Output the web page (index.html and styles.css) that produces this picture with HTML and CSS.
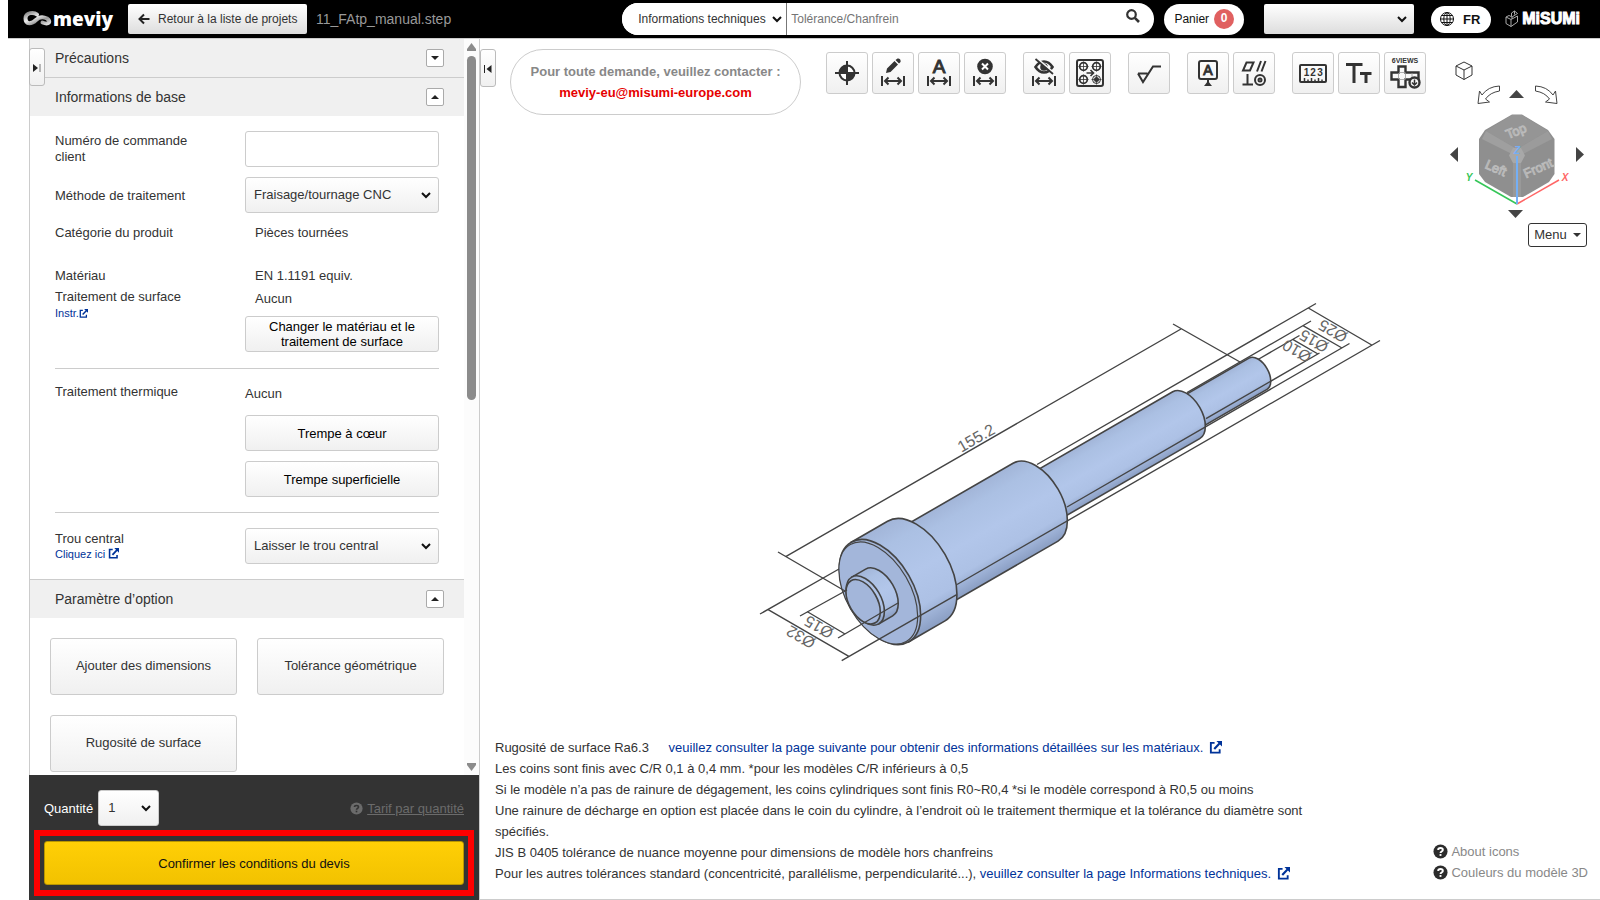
FILE: index.html
```html
<!DOCTYPE html>
<html lang="fr">
<head>
    <meta charset="UTF-8">
    <meta name="viewport" content="width=device-width, initial-scale=1.0">
    <title>meviy - 11_FAtp_manual.step</title>
    <link rel="stylesheet" href="styles.css">
</head>
<body>

    <!-- shared symbols -->
    <svg class="defs" width="0" height="0" aria-hidden="true">
        <symbol id="dim" viewBox="1 1 40 40">
            <path d="M10 24V34M32 24V34M13 29H29M16.500 25.500L13 29L16.500 32.500M25.500 25.500L29 29L25.500 32.500" fill="none" stroke="#333" stroke-width="2"/>
        </symbol>
        <symbol id="ext" viewBox="0 0 14 14">
            <path d="M6 2H2V12.500H11.500V9" fill="none" stroke="currentColor" stroke-width="2"/>
            <path d="M8 0H14V6L11.800 3.800L6.500 9.500L4.800 7.800L10.200 2.200Z" fill="currentColor"/>
        </symbol>
        <symbol id="help" viewBox="0 0 16 16">
            <circle cx="8" cy="8" r="7.500" fill="currentColor"/>
            <path class="q" d="M5.500 6.300C5.500 3.600 10.500 3.600 10.500 6.300C10.500 8 8 7.900 8 9.500" fill="none" stroke-width="2"/>
            <rect class="qd" x="7" y="10.700" width="2" height="2"/>
        </symbol>
    </svg>

    <header class="header">
        <a class="logo" href="#">
            <svg width="29" height="18" viewBox="0 0 29 18" aria-hidden="true">
                <defs>
                    <linearGradient id="metal" x1="0" y1="0" x2="1" y2="1">
                        <stop offset="0" stop-color="#888"/><stop offset=".4" stop-color="#eee"/><stop offset=".7" stop-color="#999"/><stop offset="1" stop-color="#ddd"/>
                    </linearGradient>
                </defs>
                <path d="M14 4.500C11 2 2.500 2 2.500 8.500C2.500 15 9 14 13 10C16 7 20 6.500 24 8.500C28.500 11.500 26 15 19.500 12.500" fill="none" stroke="url(#metal)" stroke-width="4" stroke-linecap="round"/>
            </svg>
            <span>meviy</span>
        </a>
        <a class="back" href="#">
            <svg width="12" height="12" viewBox="0 0 12 12" aria-hidden="true"><path d="M11.500 6H2M6 1.500L1.500 6L6 10.500" fill="none" stroke="#222" stroke-width="2"/></svg>
            Retour à la liste de projets
        </a>
        <span class="filename">11_FAtp_manual.step</span>

        <form class="search">
            <select class="search-type" aria-label="Catégorie de recherche"><option>Informations techniques</option></select>
            <input type="text" placeholder="Tolérance/Chanfrein" aria-label="Recherche">
            <button type="button" aria-label="Rechercher">
                <svg width="14" height="14" viewBox="0 0 14 14"><circle cx="5.500" cy="5.500" r="4.300" fill="none" stroke="#333" stroke-width="2.200"/><path d="M8.800 8.800L13 13" stroke="#333" stroke-width="2.600"/></svg>
            </button>
        </form>
        <a class="cart" href="#">Panier <span class="badge">0</span></a>
        <select class="account" aria-label="Compte"><option></option></select>
        <button class="lang" type="button">
            <svg width="14" height="14" viewBox="0 0 14 14" aria-hidden="true"><g fill="none" stroke="#111"><circle cx="7" cy="7" r="6.500"/><ellipse cx="7" cy="7" rx="3.200" ry="6.500"/><path d="M7 0V14M0 7H14M1.500 3.500H12.500M1.500 10.500H12.500"/></g></svg>
            FR
        </button>
        <a class="misumi" href="#">
            <svg width="14" height="18" viewBox="0 0 14 18" aria-hidden="true"><path d="M1 7L6 9.500V16.500L1 13.500ZM6 9.500L12.500 6V12L6 16.500M1 7L4 5.500L7 7L12.500 3.500L9.500 1L6.500 3V6.500M9.500 1V4.500M7 7V9" fill="none" stroke="#aaa"/></svg>
            <span>MiSUMi</span>
        </a>
    </header>

    <main class="main">
        <aside class="panel">
            <button class="handle" type="button" aria-label="Replier">
                <svg width="8" height="8" viewBox="0 0 8 8"><path d="M0 0L5 4L0 8Z" fill="#222"/><path d="M7 0V8" stroke="#777"/></svg>
            </button>
            <div class="panel-body">
                <div class="scroll">
                    <section>
                        <h2 class="head">Précautions
                            <button class="toggle" type="button" aria-label="Ouvrir Précautions"><svg width="8" height="4" viewBox="0 0 8 4"><path d="M0 0H8L4 4Z"/></svg></button>
                        </h2>
                    </section>
                    <section>
                        <h2 class="head">Informations de base
                            <button class="toggle" type="button" aria-label="Fermer Informations de base"><svg width="8" height="4" viewBox="0 0 8 4"><path d="M0 4H8L4 0Z"/></svg></button>
                        </h2>
                        <div class="fields">
                            <div class="row">
                                <label class="name name-order" for="order">Numéro de commande client</label>
                                <input class="control" id="order" type="text">
                            </div>
                            <div class="row">
                                <label class="name" for="method">Méthode de traitement</label>
                                <select class="control" id="method"><option>Fraisage/tournage CNC</option></select>
                            </div>
                            <div class="row">
                                <div class="name">Catégorie du produit</div>
                                <div class="value indent">Pièces tournées</div>
                            </div>
                            <div class="row material">
                                <div class="name">
                                    <div>Matériau</div>
                                    <div class="surface">Traitement de surface</div>
                                    <a class="instr" href="#">Instr.<svg width="9" height="9"><use href="#ext"/></svg></a>
                                </div>
                                <div class="value">
                                    <div class="indent">EN 1.1191 equiv.</div>
                                    <div class="indent finish">Aucun</div>
                                    <button class="control" type="button">Changer le matériau et le traitement de surface</button>
                                </div>
                            </div>
                            <hr>
                            <div class="row heat">
                                <div class="name">Traitement thermique</div>
                                <div class="value">
                                    <div class="state">Aucun</div>
                                    <button class="control" type="button">Trempe à cœur</button>
                                    <button class="control" type="button">Trempe superficielle</button>
                                </div>
                            </div>
                            <hr>
                            <div class="row hole">
                                <div class="name">
                                    <label for="hole">Trou central</label><br>
                                    <a href="#">Cliquez ici <svg width="11" height="11"><use href="#ext"/></svg></a>
                                </div>
                                <select class="control" id="hole"><option>Laisser le trou central</option></select>
                            </div>
                        </div>
                    </section>
                    <section>
                        <h2 class="head">Paramètre d’option
                            <button class="toggle" type="button" aria-label="Fermer Paramètre d’option"><svg width="8" height="4" viewBox="0 0 8 4"><path d="M0 4H8L4 0Z"/></svg></button>
                        </h2>
                        <div class="options">
                            <button type="button">Ajouter des dimensions</button>
                            <button type="button">Tolérance géométrique</button>
                            <button type="button">Rugosité de surface</button>
                        </div>
                    </section>
                </div>
                <div class="scrollbar" aria-hidden="true">
                    <svg width="9" height="8" viewBox="0 0 9 8"><path d="M4.500 0L9 6V8H0V6Z" fill="#8b8b8b"/></svg>
                    <div class="track"><div class="thumb"></div></div>
                    <svg width="9" height="8" viewBox="0 0 9 8"><path d="M4.500 8L9 2V0H0V2Z" fill="#8b8b8b"/></svg>
                </div>
            </div>
            <div class="order">
                <div class="quantity">
                    <label for="qty">Quantité</label>
                    <select id="qty"><option>1</option></select>
                    <a class="tarif" href="#"><svg width="13" height="13"><use href="#help"/></svg> <span>Tarif par quantité</span></a>
                </div>
                <div class="highlight">
                    <button class="confirm" type="button">Confirmer les conditions du devis</button>
                </div>
            </div>
        </aside>

        <section class="viewer">
            <!-- 3D model -->
            <svg class="model" viewBox="480 39 1120 860" role="img" aria-label="Modèle 3D">
                <defs>
                    <linearGradient id="steel" x1="0" y1="0" x2="0" y2="1">
                        <stop offset="0" stop-color="#a2b5d8"/><stop offset=".18" stop-color="#abc0e3"/><stop offset=".5" stop-color="#b2c6ea"/><stop offset=".78" stop-color="#adc1e5"/><stop offset="1" stop-color="#8a9ec3"/>
                    </linearGradient>
                </defs>
                <!-- x axis of this group runs along the shaft -->
                <g transform="translate(880 592) rotate(-30)" fill="url(#steel)" stroke="#444" stroke-width="1.600">
                    <path d="M340 -18H436.500A10.400 18 0 0 1 436.500 18H340Z"/>
                    <path d="M170 -27H353.600A15.600 27 0 0 1 353.600 27H170Z"/>
                    <path d="M30 -45H179.600A26 45 0 0 1 179.600 45H30Z"/>
                    <path d="M0 -57.500H41.900A33.200 57.500 0 0 1 41.900 57.500H0Z"/>
                    <ellipse cx="0" cy="0" rx="33.200" ry="57.500" fill="#a3b6da"/>
                    <ellipse cx="-2" cy="0" rx="32" ry="56" fill="#a3b6da" stroke-width="1.200"/>
                    <path d="M-17 -27H-1A15.600 27 0 0 1 -1 27H-17Z"/>
                    <ellipse cx="-17" cy="0" rx="15.600" ry="27"/>
                    <ellipse cx="-19.500" cy="0" rx="14" ry="24.300" fill="#a3b6da"/>
                </g>
                <g class="dims">
                    <path d="M778 552L845 591M785.700 556.700L1181 329M1173 324L1240 362"/>
                    <path d="M839 569L760 614M767.700 609.300L849.300 656.700M841.700 660.700L956.700 594.700"/>
                    <path d="M847 590L800 616M807 611.500L845 634M838 638L898 603"/>
                    <path d="M1037 464.500L1316 303.500M1308.300 308L1371.700 345M957 584.500L1380 340.500"/>
                    <path d="M1187 392.700L1311 321M1303 325.700L1342 348M1067 507L1349.500 343.500"/>
                    <path d="M1258 359.500L1299.500 335.500M1292.700 339.300L1318 354M1206 418.700L1319.500 353"/>
                </g>
                <g class="dim-text">
                    <text transform="translate(976 438) rotate(-30)">155.2</text>
                    <text transform="translate(1333 331) rotate(210)">Ø25</text>
                    <text transform="translate(1314 341) rotate(210)">Ø15</text>
                    <text transform="translate(1297 351) rotate(210)">Ø10</text>
                    <text transform="translate(801 637) rotate(210)">Ø32</text>
                    <text transform="translate(819 627) rotate(210)">Ø15</text>
                </g>
            </svg>

            <div class="overlay">
                <button class="handle handle-right" type="button" aria-label="Déplier">
                    <svg width="8" height="8" viewBox="0 0 8 8"><path d="M7.500 0L2.500 4L7.500 8Z" fill="#222"/><path d="M.500 0V8" stroke="#222"/></svg>
                </button>
                <div class="top">
                    <div class="contact">
                        <p>Pour toute demande, veuillez contacter :</p>
                        <a href="mailto:meviy-eu@misumi-europe.com">meviy-eu@misumi-europe.com</a>
                    </div>

                    <div class="toolbar">
                        <div class="group">
                            <button type="button" aria-label="Origine"><svg viewBox="1 1 40 40"><circle cx="21" cy="21" r="7.500" fill="#fff" stroke="#333" stroke-width="2"/><path d="M21 21V13.500A7.500 7.500 0 0 0 13.500 21ZM21 21V28.500A7.500 7.500 0 0 0 28.500 21Z" fill="#333"/><path d="M21 9V33M9 21H33" stroke="#333" stroke-width="2"/></svg></button>
                            <button type="button" aria-label="Modifier la cote"><svg viewBox="1 1 40 40"><path d="M14 21L15 16.500L22.500 9L26 12.500L18.500 20ZM23.500 8L25.500 6.500Q27 6 28.200 7.500Q29 9 28.500 10L27 11.500Z" fill="#333"/><use href="#dim" x="1" y="1" width="40" height="40"/></svg></button>
                            <button type="button" aria-label="Cote texte"><svg viewBox="1 1 40 40"><text x="21" y="21" font-size="19" stroke="#333">A</text><use href="#dim" x="1" y="1" width="40" height="40"/></svg></button>
                            <button type="button" aria-label="Supprimer la cote"><svg viewBox="1 1 40 40"><circle cx="21" cy="14.500" r="7.800" fill="#333"/><path d="M18 11.500L24 17.500M24 11.500L18 17.500" stroke="#fff" stroke-width="2"/><use href="#dim" x="1" y="1" width="40" height="40"/></svg></button>
                        </div>
                        <div class="group">
                            <button type="button" aria-label="Masquer les cotes"><svg viewBox="1 1 40 40"><path d="M12.500 15Q16 9.500 21 9.500T29.500 15Q26 20.500 21 20.500T12.500 15Z" fill="none" stroke="#333" stroke-width="2.600"/><circle cx="21" cy="15" r="3.800" fill="#333"/><circle cx="22" cy="14" r="1.300" fill="#fff"/><path d="M14 6.500L31 21" stroke="#f8f8f8" stroke-width="2"/><path d="M12.500 7L30 22" stroke="#333" stroke-width="1.800"/><use href="#dim" x="1" y="1" width="40" height="40"/></svg></button>
                            <button type="button" aria-label="Trous"><svg viewBox="1 1 40 40"><g fill="none" stroke="#333"><rect x="8" y="8" width="26" height="26" rx="2" stroke-width="2"/><g stroke-width="1.800"><circle cx="14.500" cy="14.500" r="3.800"/><circle cx="27.500" cy="14.500" r="3.800"/><circle cx="14.500" cy="27.500" r="3.800"/></g><path d="M14.500 9.500V19.500M9.500 14.500H19.500M27.500 9.500V19.500M22.500 14.500H32.500M14.500 22.500V32.500M9.500 27.500H19.500M27.500 22.500V32.500M22.500 27.500H32.500" stroke-width=".8"/><circle cx="27.500" cy="27.500" r="4"/><path d="M17.500 21H24M21.500 18L24.500 21L21.500 24" stroke-width="1.600"/></g><circle cx="27.500" cy="27.500" r="2.500" fill="#333"/></svg></button>
                        </div>
                        <div class="group">
                            <button type="button" aria-label="Rugosité"><svg viewBox="1 1 40 40"><path d="M10 21.500H19.500M10 21.500L15 30L25 14.500H33" fill="none" stroke="#333" stroke-width="2"/></svg></button>
                        </div>
                        <div class="group">
                            <button type="button" aria-label="Référence"><svg viewBox="1 1 40 40"><rect x="12" y="9" width="18" height="18" rx="2" fill="none" stroke="#333" stroke-width="2"/><path d="M21 27V31" stroke="#333" stroke-width="2"/><path d="M21 29L25 34H17Z" fill="#333"/><text x="21" y="23" font-size="14" stroke="#333">A</text></svg></button>
                            <button type="button" aria-label="Tolérance géométrique"><svg viewBox="1 1 40 40"><g fill="none" stroke="#333" stroke-width="2"><path d="M13.500 10.500H20.500L17 18.500H10ZM28 9L24 19.500M32.500 9L28.500 19.500M14.500 22V32.500M9.500 32.500H20"/><circle cx="27" cy="28" r="5"/><circle cx="27" cy="28" r="1.500"/></g></svg></button>
                        </div>
                        <div class="group">
                            <button type="button" aria-label="Mesure"><svg viewBox="1 1 40 40"><rect x="8" y="13" width="26" height="17" rx="1" fill="none" stroke="#333" stroke-width="2"/><path d="M12.500 30V26M16 30V27.500M19.500 30V26M23 30V27.500M26.500 30V26M30 30V27.500" stroke="#333" stroke-width="1.500"/><g font-size="10" font-weight="bold"><text x="14.500" y="23.500">1</text><text x="21" y="23.500">2</text><text x="28" y="23.500">3</text></g></svg></button>
                            <button type="button" aria-label="Taille du texte"><svg viewBox="1 1 40 40"><path d="M8 12.500H24.500M16 12.500V31M22 21.500H33.500M28 21.500V31" fill="none" stroke="#333" stroke-width="3"/></svg></button>
                            <button type="button" aria-label="Six vues"><svg viewBox="1 1 40 40"><text x="21" y="11" font-size="7" font-weight="bold">6VIEWS</text><path d="M14.500 14.500H21.500V20.500H34.500V27.500H21.500V35H14.500V27.500H7.500V20.500H14.500Z" fill="#f8f8f8" stroke="#333" stroke-width="2.400"/><path d="M15 20.500H21.500M15 27.500H21.500M14.500 21V27M21.500 21V27M28 21V27" stroke="#999" stroke-width=".8"/><circle cx="30.500" cy="30.500" r="5" fill="#f8f8f8" stroke="#333" stroke-width="2.400"/><path d="M30.500 27.500V32.500M28 30.500L30.500 33L33 30.500" fill="none" stroke="#333" stroke-width="1.500"/></svg></button>
                        </div>
                    </div>

                    <div class="views">
                        <button class="home" type="button" aria-label="Vue isométrique"><svg width="18" height="20" viewBox="0 0 18 20"><path d="M9 1L17 5V14L9 18.500L1 14V5ZM1 5L9 9L17 5M9 9V18.500" fill="none" stroke="#333"/></svg></button>
                        <div class="turn">
                            <button type="button" aria-label="Pivoter à gauche"><svg width="24" height="20" viewBox="0 0 24 20"><path d="M22.500 1V6Q13 7.500 8.500 14L12.500 17L1 18.500L2.500 6L5 10Q11 1.500 22.500 1Z" fill="none" stroke="#444"/></svg></button>
                            <button class="up" type="button" aria-label="Haut"><svg width="15" height="8" viewBox="0 0 15 8"><path d="M0 8L7.500 0L15 8Z" fill="#444"/></svg></button>
                            <button type="button" aria-label="Pivoter à droite"><svg width="24" height="20" viewBox="0 0 24 20"><path d="M1.500 1V6Q11 7.500 15.500 14L11.500 17L23 18.500L21.500 6L19 10Q13 1.500 1.500 1Z" fill="none" stroke="#444"/></svg></button>
                        </div>
                        <div class="orbit">
                            <button type="button" aria-label="Gauche"><svg width="8" height="15" viewBox="0 0 8 15"><path d="M8 0L0 7.500L8 15Z" fill="#444"/></svg></button>
                            <svg class="cube" width="112" height="100" viewBox="1461 108 112 100">
                                <path d="M1512 114.500H1522L1548 130L1554.500 139V174L1549 182L1523 197H1511L1485 182L1479 174V139L1485 130Z" fill="#8f8f8f"/>
                                <path d="M1512 115H1522L1548 131L1519 148H1515L1486 131Z" fill="#959595"/>
                                <path d="M1486 131L1515 148L1512 154L1482 139Z" fill="#9f9f9f"/>
                                <path d="M1548 131L1519 148L1523 154L1552 139Z" fill="#9b9b9b"/>
                                <path d="M1513 162H1521V197H1513Z" fill="#999"/>
                                <path d="M1513 148H1521L1525 155.500L1521 163H1513L1509 155.500Z" fill="#a8a8a8"/>
                                <text class="face" transform="translate(1516 131) rotate(-22)">Top</text>
                                <text class="face" transform="translate(1496 168) rotate(24)">Left</text>
                                <text class="face" transform="translate(1538 168) rotate(-24)">Front</text>
                                <path d="M1517 204L1475 180" stroke="#35c658" stroke-width="1.500"/>
                                <path d="M1517 204L1559 180" stroke="#f66" stroke-width="1.500"/>
                                <path d="M1517 204V156" stroke="#74aff5" stroke-width="2"/>
                                <text class="axis" x="1469" y="177" fill="#35c658">Y</text>
                                <text class="axis" x="1565" y="177" fill="#f66">X</text>
                                <text class="axis" x="1517" y="150" fill="#74aff5">Z</text>
                            </svg>
                            <button type="button" aria-label="Droite"><svg width="8" height="15" viewBox="0 0 8 15"><path d="M0 0L8 7.500L0 15Z" fill="#444"/></svg></button>
                        </div>
                        <button class="down" type="button" aria-label="Bas"><svg width="15" height="8" viewBox="0 0 15 8"><path d="M0 0L7.500 8L15 0Z" fill="#444"/></svg></button>
                        <button class="menu" type="button">Menu <svg width="8" height="4" viewBox="0 0 8 4"><path d="M0 0H8L4 4Z" fill="#333"/></svg></button>
                    </div>
                </div>

                <div class="bottom">
                    <div class="notes">
                        <p>Rugosité de surface Ra6.3 <a class="more" href="#">veuillez consulter la page suivante pour obtenir des informations détaillées sur les matériaux. <svg width="13" height="13"><use href="#ext"/></svg></a></p>
                        <p>Les coins sont finis avec C/R 0,1 à 0,4 mm. *pour les modèles C/R inférieurs à 0,5</p>
                        <p>Si le modèle n’a pas de rainure de dégagement, les coins cylindriques sont finis R0~R0,4 *si le modèle correspond à R0,5 ou moins</p>
                        <p>Une rainure de décharge en option est placée dans le coin du cylindre, à l’endroit où le traitement thermique et la tolérance du diamètre sont spécifiés.</p>
                        <p>JIS B 0405 tolérance de nuance moyenne pour dimensions de modèle hors chanfreins</p>
                        <p>Pour les autres tolérances standard (concentricité, parallélisme, perpendicularité...), <a href="#">veuillez consulter la page Informations techniques. <svg width="13" height="13"><use href="#ext"/></svg></a></p>
                    </div>
                    <div class="help">
                        <a href="#"><svg width="15" height="15"><use href="#help"/></svg>About icons</a>
                        <a href="#"><svg width="15" height="15"><use href="#help"/></svg>Couleurs du modèle 3D</a>
                    </div>
                </div>
            </div>
        </section>
    </main>

</body>
</html>
```

FILE: styles.css
```css
*{
    box-sizing: border-box;
}
body{
    margin: 0;
    height: 100vh;
    display: flex;
    flex-direction: column;
    overflow: hidden;
    background-color: #fff;
    color: #333;
    font-family: "Liberation Sans", Arial, sans-serif;
    font-size: 13px;
}
button, input, select{
    font-family: inherit;
    font-size: inherit;
    color: inherit;
    margin: 0;
}
button{
    padding: 0;
}
a{
    color: #003399;
    text-decoration: none;
}
p{
    margin: 0;
}
svg{
    flex: none;
}
select{
    appearance: none;
    background: url("data:image/svg+xml,%3Csvg xmlns='http://www.w3.org/2000/svg' width='10' height='7'%3E%3Cpath d='M1 1L5 5L9 1' fill='none' stroke='%23111' stroke-width='2'/%3E%3C/svg%3E") no-repeat right 7px center, linear-gradient(#fff, #f0f0f0);
}
.defs{
    position: absolute;
}

/* header */
.header{
    margin-left: 8px;
    height: 39px;
    padding: 0 20px 0 15px;
    border-bottom: 1px solid #ccc;
    background-color: #000;
    display: flex;
    align-items: center;
    flex: none;
}
.logo{
    width: 105px;
    display: flex;
    align-items: center;
    gap: 1px;
    color: #fff;
    font-family: "Open Sans", sans-serif;
    font-size: 19px;
    font-weight: 800;
    line-height: 24px;
}
.back{
    width: 179px;
    height: 30px;
    padding-left: 10px;
    display: flex;
    align-items: center;
    gap: 8px;
    border-radius: 2px;
    background: linear-gradient(#fff, #ddd);
    color: #333;
    font-size: 12px;
}
.filename{
    margin-left: 9px;
    color: #999;
    font-size: 14px;
}
.search{
    margin-left: auto;
    width: 532px;
    height: 32px;
    display: flex;
    border-radius: 16px;
    background-color: #fff;
    overflow: hidden;
    font-size: 12px;
}
.search-type{
    width: 165px;
    padding: 0 0 0 16px;
    border: 0;
    border-right: 1px solid #777;
    background-color: #fff;
    background-position: right 4px center, 0 0;
    background-size: auto, 0 0;
}
.search input{
    flex: 1;
    padding: 0 4px;
    border: 0;
    background: none;
}
.search input::placeholder{
    color: #757575;
}
.search button{
    width: 42px;
    padding-bottom: 4px;
    border: 0;
    background: none;
}
.cart{
    margin-left: 10px;
    width: 80px;
    height: 31px;
    display: flex;
    align-items: center;
    justify-content: center;
    gap: 5px;
    border-radius: 16px;
    background-color: #fff;
    color: #111;
    font-size: 12px;
}
.badge{
    width: 20px;
    height: 20px;
    border-radius: 50%;
    background-color: #e06060;
    color: #fff;
    line-height: 19px;
    text-align: center;
    font-weight: bold;
}
.account{
    margin-left: 20px;
    width: 150px;
    height: 30px;
    border: 0;
    border-radius: 2px;
    background-color: #eee;
    background-image: url("data:image/svg+xml,%3Csvg xmlns='http://www.w3.org/2000/svg' width='10' height='7'%3E%3Cpath d='M1 1L5 5L9 1' fill='none' stroke='%23111' stroke-width='2'/%3E%3C/svg%3E"), linear-gradient(#fff, #ddd);
}
.lang{
    margin-left: 17px;
    width: 60px;
    height: 27px;
    display: flex;
    align-items: center;
    justify-content: center;
    gap: 9px;
    padding-right: 2px;
    border: 0;
    border-radius: 14px;
    background-color: #fff;
    color: #111;
    font-size: 13px;
    font-weight: bold;
}
.misumi{
    margin-left: 14px;
    display: flex;
    align-items: center;
    gap: 3px;
    color: #fff;
    font-size: 16px;
    font-weight: bold;
    -webkit-text-stroke: 1px #fff;
}

/* left panel */
.main{
    flex: 1;
    min-height: 0;
    margin-left: 29px;
    display: flex;
}
.panel{
    position: relative;
    width: 451px;
    flex: none;
    display: flex;
    flex-direction: column;
    border-right: 1px solid #ccc;
}
.panel-body{
    flex: 1;
    min-height: 0;
    display: flex;
    border-left: 1px solid #ccc;
}
.scroll{
    flex: 1;
    overflow: hidden;
}
.scrollbar{
    width: 15px;
    padding: 4px 0;
    display: flex;
    flex-direction: column;
    align-items: center;
    background-color: #fcfcfc;
}
.track{
    flex: 1;
    margin: 5px 0;
}
.thumb{
    width: 9px;
    height: 49%;
    border-radius: 5px;
    background-color: #8b8b8b;
}
.handle{
    position: absolute;
    left: 0;
    top: 9px;
    width: 16px;
    height: 38px;
    border: 1px solid #bbb;
    border-radius: 3px;
    background: linear-gradient(#fff, #f0f0f0);
}
.handle-right{
    top: 10px;
}
.head{
    height: 38px;
    margin: 0;
    padding: 0 20px 0 25px;
    display: flex;
    align-items: center;
    justify-content: space-between;
    background-color: #f0f0f0;
    font-size: 14px;
    font-weight: normal;
}
section + section .head{
    height: 39px;
    border-top: 1px solid #ccc;
}
.toggle{
    width: 18px;
    height: 18px;
    display: flex;
    align-items: center;
    justify-content: center;
    border: 1px solid #aaa;
    border-radius: 2px;
    background-color: #fff;
    fill: #222;
}
.fields{
    padding: 15px 25px;
}
.row{
    display: flex;
    align-items: center;
    margin-bottom: 10px;
}
.name{
    width: 190px;
    flex: none;
    line-height: 19px;
}
.name-order{
    padding-right: 40px;
    line-height: 16px;
}
.value{
    flex: 1;
    line-height: 19px;
}
.indent{
    padding-left: 10px;
}
.control{
    flex: 1;
    display: block;
    width: 100%;
    min-width: 0;
    height: 36px;
    padding: 0 8px 2px;
    border: 1px solid #ccc;
    border-radius: 3px;
}
button.control{
    padding: 0 20px;
    background: linear-gradient(#fff, #f0f0f0);
    color: #000;
    line-height: 15px;
}
.material{
    align-items: flex-start;
    margin: 24px 0 16px;
}
.surface{
    margin-top: 1px;
    line-height: 21px;
}
.instr{
    display: block;
    font-size: 11px;
    line-height: 12px;
}
.instr svg, .hole svg{
    vertical-align: -1px;
}
.finish{
    margin: 4px 0 8px;
}
hr{
    margin: 0;
    border: 0;
    border-top: 1px solid #ccc;
}
.heat{
    align-items: flex-start;
    margin: 13px 0 15px;
}
.state{
    margin: 2px 0 12px;
}
.heat .control + .control{
    margin-top: 10px;
}
.hole{
    margin: 15px 0 0;
}
.hole .name{
    line-height: 15px;
}
.hole a{
    font-size: 11px;
}
.options{
    padding: 20px;
    display: grid;
    grid-template-columns: 1fr 1fr;
    gap: 20px;
}
.options button{
    height: 57px;
    padding-bottom: 2px;
    border: 1px solid #ccc;
    border-radius: 3px;
    background: linear-gradient(#fff, #f0f0f0);
}

/* order footer */
.order{
    --mark: #333;
    padding: 15px 5px 4px;
    background-color: #333;
    color: #fff;
}
.quantity{
    padding: 0 10px;
    display: flex;
    align-items: center;
    gap: 5px;
}
.quantity select{
    width: 61px;
    height: 36px;
    padding: 0 9px 2px;
    border: 1px solid #ccc;
    border-radius: 3px;
    color: #333;
}
.tarif{
    margin-left: auto;
    display: flex;
    align-items: center;
    gap: 4px;
    color: #6b6b6b;
}
.tarif span{
    text-decoration: underline;
}
.q{
    stroke: var(--mark, #fff);
}
.qd{
    fill: var(--mark, #fff);
}
.highlight{
    margin-top: 4px;
    padding: 5px 4px;
    border: 6px solid #f00;
}
.confirm{
    display: block;
    width: 100%;
    height: 44px;
    border: 1px solid #b89600;
    border-radius: 3px;
    background: linear-gradient(#ffcf06, #f2c200);
    color: #111;
}

/* viewer */
.viewer{
    position: relative;
    flex: 1;
    min-width: 0;
    display: grid;
    grid-template: 100% / 100%;
    border-bottom: 1px solid #ccc;
}
.model, .overlay{
    grid-area: 1 / 1;
}
.model{
    width: 100%;
    height: 100%;
}
.dims{
    fill: none;
    stroke: #444;
    stroke-width: 1.4px;
}
.dim-text text{
    fill: #666;
    font-size: 16px;
    text-anchor: middle;
    dominant-baseline: central;
}
.overlay{
    z-index: 1;
    display: flex;
    flex-direction: column;
    justify-content: space-between;
}
.top{
    padding: 10px 13px 0 30px;
    display: flex;
    align-items: flex-start;
}
.contact{
    width: 291px;
    height: 66px;
    padding-top: 11px;
    border: 1px solid #ccc;
    border-radius: 33px;
    color: #888;
    text-align: center;
    font-weight: bold;
    line-height: 21px;
}
.contact a{
    color: #e60000;
}
.toolbar{
    margin: 3px 0 0 25px;
    display: flex;
    gap: 17px;
}
.group{
    display: flex;
    gap: 4px;
}
.group button{
    width: 42px;
    height: 42px;
    border: 1px solid #ccc;
    border-radius: 3px;
    background: linear-gradient(#fff, #f0f0f0);
}
.group svg{
    display: block;
    width: 40px;
    height: 40px;
}
.group text{
    fill: #333;
    text-anchor: middle;
}
.views{
    margin: 12px 0 0 auto;
    width: 137px;
    display: flex;
    flex-direction: column;
}
.views button{
    border: 0;
    background: none;
}
.views button svg{
    display: block;
}
.home{
    align-self: flex-start;
    margin-left: 5px;
}
.turn{
    width: 134px;
    margin-top: 4px;
    display: flex;
    align-items: center;
    justify-content: center;
    gap: 8px;
}
.turn .up{
    padding: 0 2px 3px 0;
}
.orbit{
    width: 134px;
    margin-top: 3px;
    display: flex;
    align-items: center;
    justify-content: space-between;
}
.orbit button{
    padding-bottom: 7px;
}
.down{
    width: 130px;
    margin-top: 2px;
}
.down svg{
    margin: 0 auto;
}
.face{
    fill: #8f8f8f;
    stroke: #bbb;
    stroke-width: 1px;
    font-size: 13px;
    text-anchor: middle;
    dominant-baseline: central;
}
.axis{
    font-size: 10px;
    font-style: italic;
    font-weight: bold;
    text-anchor: middle;
    dominant-baseline: central;
}
.views .menu{
    align-self: flex-end;
    margin-top: 5px;
    width: 59px;
    height: 24px;
    padding-bottom: 1px;
    display: flex;
    align-items: center;
    justify-content: center;
    gap: 6px;
    border: 1px solid #333;
    border-radius: 3px;
    background-color: #fff;
}
.bottom{
    padding: 0 12px 15px 15px;
    display: flex;
    align-items: flex-end;
    justify-content: space-between;
    line-height: 21px;
}
.notes{
    flex: 1;
    padding-right: 110px;
}
.notes svg{
    margin-left: 2px;
    vertical-align: -2px;
}
.more{
    margin-left: 16px;
}
.help{
    padding-bottom: 1px;
}
.help a{
    display: flex;
    align-items: center;
    gap: 3px;
    color: #888;
}
.help svg{
    color: #2c2c2c;
}
```
